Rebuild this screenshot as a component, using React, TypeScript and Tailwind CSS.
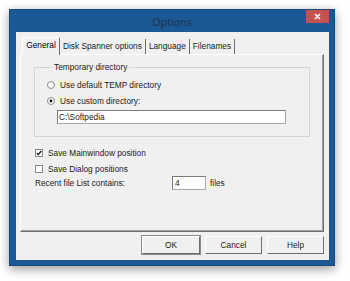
import React from 'react';

const ui = { fontFamily: '"Liberation Sans", Arial, sans-serif' };

function Radio({ checked }: { checked?: boolean }) {
  return (
    <svg width="8" height="8" viewBox="0 0 8 8" className="shrink-0">
      <circle cx="4" cy="4" r="3.5" fill="#fff" stroke="#8a8a8a" strokeWidth="1" />
      {checked && <circle cx="4" cy="4" r="1.4" fill="#111" />}
    </svg>
  );
}

function Check({ checked }: { checked?: boolean }) {
  return (
    <svg width="8" height="8" viewBox="0 0 8 8" className="shrink-0">
      <rect x="0.5" y="0.5" width="7" height="7" fill="#fff" stroke="#8a8a8a" />
      {checked && <path d="M1.8 4 L3.3 5.6 L6.3 2" fill="none" stroke="#111" strokeWidth="1.3" />}
    </svg>
  );
}

function Btn({ label, primary }: { label: string; primary?: boolean }) {
  return (
    <button
      className={
        'h-[18px] flex items-center justify-center bg-[#f0f0f0] text-[8.3px] text-[#1a1a1a] border border-t-white border-l-white border-r-[#6d6d6d] border-b-[#6d6d6d] ' +
        (primary ? 'w-[58px] outline outline-1 outline-[#8a8a8a]' : 'w-[57px]')
      }
      style={ui}
    >
      {label}
    </button>
  );
}

export default function App() {
  return (
    <div className="w-[350px] h-[281px] bg-white overflow-hidden pt-[9px] pl-[9px]" style={ui}>
      <div className="w-[326px] h-[257px] bg-[#1b5996] border border-[#164b80] shadow-[0_3px_10px_rgba(0,0,0,0.4)] flex flex-col">
        {/* title bar */}
        <div className="relative h-[22px] flex items-center justify-center shrink-0">
          <span className="text-[10.7px] text-[#1d3046] pt-[2px]" style={{ fontFamily: '"Noto Sans", "Liberation Sans", sans-serif' }}>
            Options
          </span>
          <div className="absolute right-[5px] top-0 w-[23px] h-[13px] bg-[#c75050] flex items-center justify-center">
            <svg width="7" height="7" viewBox="0 0 7 7">
              <path d="M1 1 L6 6 M6 1 L1 6" stroke="#fff" strokeWidth="1.5" />
            </svg>
          </div>
        </div>

        {/* client */}
        <div className="flex-1 ml-[6px] mr-[5px] mb-[5px] bg-[#f0f0f0] pt-[5px] pl-[4px] pr-[5px] flex flex-col text-[8.3px] text-[#1a1a1a]">
          {/* tabs */}
          <div className="flex items-end h-[17px] ml-[2px] shrink-0">
            <div className="relative z-10 -mb-px h-[18px] w-[38px] bg-[#f0f0f0] border-l border-t border-white border-r border-r-[#6d6d6d] rounded-t-[1px] flex items-center justify-center text-[#000] pb-[2px]">
              General
            </div>
            <div className="h-[15px] pl-[3px] pr-[3px] border-r border-[#6d6d6d] flex items-center">Disk Spanner options</div>
            <div className="h-[15px] pl-[3px] pr-[3px] border-r border-[#6d6d6d] flex items-center">Language</div>
            <div className="h-[15px] pl-[3px] pr-[3px] border-r border-[#6d6d6d] flex items-center">Filenames</div>
          </div>

          {/* panel */}
          <div className="h-[178px] border border-t-white border-l-white border-r-[#6d6d6d] border-b-[#6d6d6d] shadow-[inset_-1px_-1px_0_#a0a0a0] flex flex-col shrink-0">
            <fieldset className="ml-[13px] mt-[7px] w-[276px] border border-[#d5d5d5] pl-[12px] pb-[12px]">
              <legend className="ml-[5px] px-[2px] leading-[10px]">Temporary directory</legend>
              <div className="flex items-center gap-[5px] h-[12px] mt-[7px]">
                <Radio />
                <span>Use default TEMP directory</span>
              </div>
              <div className="flex items-center gap-[5px] h-[12px] mt-[4px]">
                <Radio checked />
                <span>Use custom directory:</span>
              </div>
              <div className="ml-[10px] mt-[3px] w-[229px] h-[14px] bg-white border border-[#a8a8a8] border-t-[#7a7a7a] border-l-[#7a7a7a] flex items-center pl-[1px]">
                C:\Softpedia
              </div>
            </fieldset>

            <div className="ml-[14px] mt-[10px] flex items-center gap-[5px] h-[12px]">
              <Check checked />
              <span>Save Mainwindow position</span>
            </div>
            <div className="ml-[14px] mt-[4px] flex items-center gap-[5px] h-[12px]">
              <Check />
              <span>Save Dialog positions</span>
            </div>
            <div className="ml-[14px] mt-[1px] flex items-center h-[14px]">
              <span className="w-[137px]">Recent file List contains:</span>
              <div className="w-[34px] h-[14px] bg-white border border-[#a8a8a8] border-t-[#7a7a7a] border-l-[#7a7a7a] flex items-center pl-[2px]">
                4
              </div>
              <span className="ml-[4px]">files</span>
            </div>
          </div>

          {/* buttons */}
          <div className="flex justify-end gap-[5px] mt-[4px]">
            <Btn label="OK" primary />
            <Btn label="Cancel" />
            <Btn label="Help" />
          </div>
        </div>
      </div>
    </div>
  );
}
